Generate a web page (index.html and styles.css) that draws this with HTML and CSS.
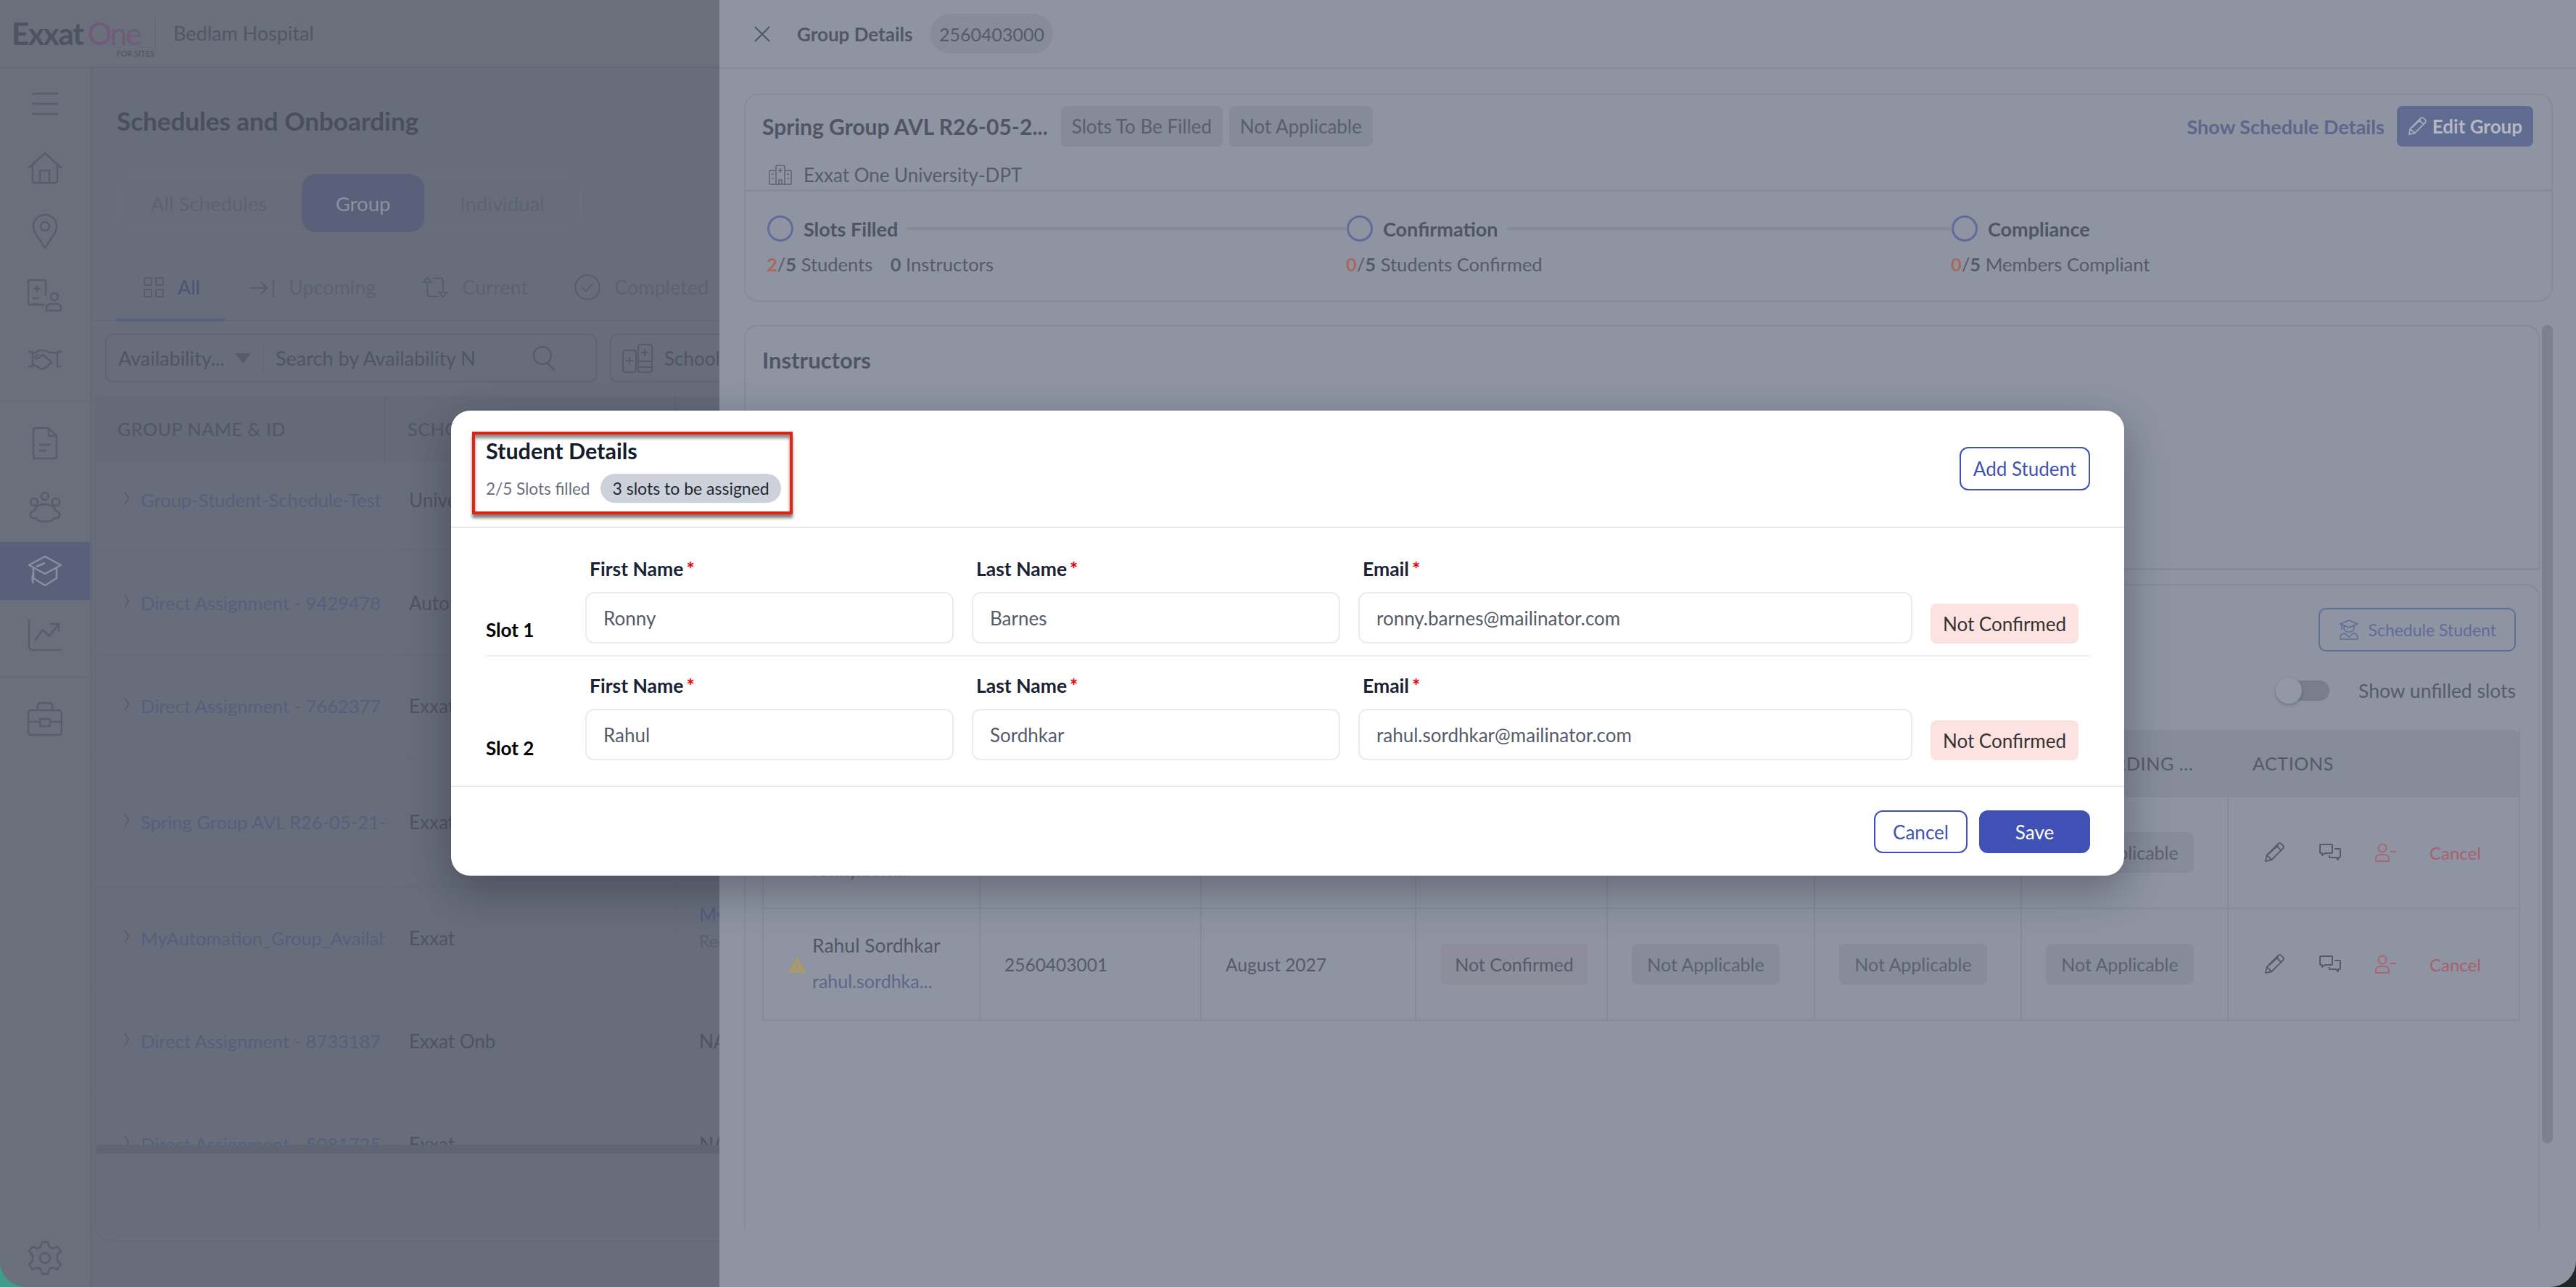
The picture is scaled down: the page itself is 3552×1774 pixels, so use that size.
FILE: index.html
```html
<!DOCTYPE html>
<html lang="en">

<head>
    <meta charset="UTF-8">
    <title>Schedules and Onboarding</title>
    <link rel="stylesheet" href="styles.css">
</head>

<body>
    <svg class="defs" width="0" height="0">
        <symbol id="i-pencil" viewBox="0 0 30 30">
            <path d="M2 28l2-9L21 2c1-1 3-1 4 0l3 3c1 1 1 3 0 4L11 26zM4 19l7 7M18 5l7 7M7 17L21 4" fill="none" stroke="currentColor" stroke-width="2" stroke-linejoin="round" />
        </symbol>
        <symbol id="i-chat" viewBox="0 0 30 24">
            <path d="M2 1h15c1 0 1 1 1 1v10c0 1-1 1-1 1H8l-4 3v-3H2c-1 0-1-1-1-1V2s0-1 1-1zM21 7h7c1 0 1 1 1 1v10c0 1-1 1-1 1h-2v3l-3-3h-9v-3" fill="none" stroke="currentColor" stroke-width="2" stroke-linejoin="round" />
        </symbol>
        <symbol id="i-user-minus" viewBox="0 0 30 26">
            <circle cx="10" cy="7" r="5.5" fill="none" stroke="currentColor" stroke-width="2" />
            <path d="M1 25v-4c0-3 3-5 6-5h6c3 0 6 2 6 5v4zM21 12h8" fill="none" stroke="currentColor" stroke-width="2" />
        </symbol>
    </svg>

    <div class="window">
        <div class="app">
            <header class="topbar">
                <div class="logo">
                    <span class="logo-exxat">Exxat</span><span class="logo-one">One</span>
                    <span class="logo-sites">FOR SITES</span>
                </div>
                <span class="hospital">Bedlam Hospital</span>
            </header>

            <div class="app-body">
                <nav class="sidebar">
                    <div class="side-group">
                        <div class="side-item">
                            <svg class="side-ic" viewBox="0 0 48 48"><path d="M6 10h36M6 24h36M6 38h36" /></svg>
                        </div>
                        <div class="side-item">
                            <svg class="side-ic" viewBox="0 0 48 44"><path d="M1 23L24 2l23 21M7 18v22c0 2 1 3 3 3h28c2 0 3-1 3-3V18M17 43V26h13v17" /></svg>
                        </div>
                        <div class="side-item">
                            <svg class="side-ic" viewBox="0 0 48 48"><path d="M24 47C17 34 8 27 8 17a16 16 0 0 1 32 0c0 10-9 17-16 30z" /><circle cx="24" cy="17" r="6" /></svg>
                        </div>
                        <div class="side-item">
                            <svg class="side-ic" viewBox="0 0 48 44"><path d="M24 35H3c-1 0-2-1-2-2V3c0-1 1-2 2-2h20c1 0 2 1 2 2v20M7 26h8M7 34h8M13 8v10M8 13h10" /><circle cx="37" cy="24" r="5" /><path d="M26 43v-4c0-3 3-5 5-5h10c3 0 5 2 5 5v4z" /></svg>
                        </div>
                        <div class="side-item">
                            <svg class="side-ic" viewBox="0 0 48 30"><path d="M1 5h6v20H1M47 5h-6v20h6M7 8l9-5h8l6 3 7 0 4 2M7 22l4 2 8 5c2 0 3-1 3-2 2 1 4 0 4-2 2 0 4-1 3-3 3 0 5-2 3-4l-11-9-7 5c-2 1-4 0-4-2l5-4" /></svg>
                        </div>
                    </div>
                    <div class="side-group">
                        <div class="side-item">
                            <svg class="side-ic" viewBox="0 0 48 44"><path d="M8 40V4c0-2 1-3 3-3h18l11 11v28c0 2-1 3-3 3H11c-2 0-3-1-3-3zM29 1v11h11M16 24h16M16 32h10" /></svg>
                        </div>
                        <div class="side-item">
                            <svg class="side-ic" viewBox="0 0 48 42"><circle cx="24" cy="6" r="5" /><circle cx="9" cy="14" r="5" /><circle cx="39" cy="14" r="5" /><path d="M24 17c8 0 13 4 15 9 4 1 6 4 5 7s-4 4-7 3c-3 4-8 5-13 5s-10-1-13-5c-3 1-6 0-7-3s1-6 5-7c2-5 7-9 15-9z" /></svg>
                        </div>
                        <div class="side-item side-item-active">
                            <svg class="side-ic" viewBox="0 0 48 42"><path d="M24 1L2 13l22 12 22-12zM8 17v14l16 10 16-10V17M12 15l12-5M8 24c-2 6-2 10 0 14" /></svg>
                        </div>
                        <div class="side-item">
                            <svg class="side-ic" viewBox="0 0 48 44"><path d="M2 1v37c0 3 2 5 5 5h40M10 30l11-15 9 9 13-17M31 7h12v11" /></svg>
                        </div>
                    </div>
                    <div class="side-group side-group-last">
                        <div class="side-item">
                            <svg class="side-ic" viewBox="0 0 48 46"><rect x="1" y="11" width="46" height="34" rx="4" /><path d="M14 11V5c0-2 1-4 4-4h12c3 0 4 2 4 4v6M1 27h16M31 27h16M17 23h14v7c0 2-1 3-3 3h-8c-2 0-3-1-3-3z" /></svg>
                        </div>
                    </div>
                    <div class="side-foot">
                        <svg class="side-ic" viewBox="0 0 48 48"><circle cx="24" cy="24" r="7" /><path d="M20 2h8l2 7 5 2 6-3 5 7-5 5v8l5 5-5 7-6-3-5 2-2 7h-8l-2-7-5-2-6 3-5-7 5-5v-8l-5-5 5-7 6 3 5-2z" /></svg>
                    </div>
                </nav>

                <main class="main">
                    <h1 class="page-title">Schedules and Onboarding</h1>

                    <div class="segment">
                        <span class="seg-item seg-first">All Schedules</span>
                        <span class="seg-item seg-active">Group</span>
                        <span class="seg-item seg-last">Individual</span>
                    </div>

                    <div class="tabs">
                        <div class="tab tab-active">
                            <svg class="tab-ic" viewBox="0 0 28 28"><rect x="1" y="1" width="10" height="10" rx="2" /><rect x="17" y="1" width="10" height="10" rx="2" /><rect x="1" y="17" width="10" height="10" rx="2" /><rect x="17" y="17" width="10" height="10" rx="2" /></svg>
                            All
                        </div>
                        <div class="tab">
                            <svg class="tab-ic tab-ic-wide" viewBox="0 0 36 28"><path d="M1 15h24M17 7l8 8-8 8M34 3v24" /></svg>
                            Upcoming
                        </div>
                        <div class="tab">
                            <svg class="tab-ic tab-ic-wide" viewBox="0 0 40 36"><path d="M8 12v16c0 3 2 4 4 4h12M2 10l6-7 6 7zM32 24V8c0-3-2-4-4-4H16M26 26l6 7 6-7z" /></svg>
                            Current
                        </div>
                        <div class="tab">
                            <svg class="tab-ic tab-ic-wide" viewBox="0 0 40 40"><circle cx="20" cy="20" r="18.5" /><path d="M12 20l6 6 10-12" /></svg>
                            Completed
                        </div>
                    </div>

                    <div class="filters">
                        <div class="search-box">
                            <span class="search-type">Availability...</span>
                            <span class="search-caret"></span>
                            <span class="search-text">Search by Availability Name</span>
                            <svg class="search-ic" viewBox="0 0 32 34"><circle cx="13" cy="13" r="12" /><path d="M20 23l10 11" /></svg>
                        </div>
                        <div class="filter-btn">
                            <svg class="filter-ic" viewBox="0 0 42 40"><rect x="1" y="9" width="18" height="30" rx="3" /><rect x="22" y="1" width="19" height="38" rx="3" /><path d="M10 18v10M5 23h10M31 7v10M26 12h10M22 24h19M22 32h19" /></svg>
                            School
                        </div>
                    </div>

                    <section class="sched">
                        <div class="sched-head">
                            <span class="sched-th sched-th-first">GROUP NAME &amp; ID</span>
                            <span class="sched-th">SCHOOL</span>
                            <span class="sched-th"></span>
                        </div>
                        <div class="sched-body">
                            <div class="sched-cell sched-name sched-top"><span class="chev"></span>Group-Student-Schedule-Test</div>
                            <div class="sched-cell sched-top">University</div>
                            <div class="sched-cell"></div>

                            <div class="sched-cell sched-name"><span class="chev"></span>Direct Assignment - 9429478</div>
                            <div class="sched-cell">Automation</div>
                            <div class="sched-cell"></div>

                            <div class="sched-cell sched-name"><span class="chev"></span>Direct Assignment - 7662377</div>
                            <div class="sched-cell">Exxat</div>
                            <div class="sched-cell"></div>

                            <div class="sched-cell sched-name"><span class="chev"></span>Spring Group AVL R26-05-21-</div>
                            <div class="sched-cell">Exxat</div>
                            <div class="sched-cell"></div>

                            <div class="sched-cell sched-name"><span class="chev"></span>MyAutomation_Group_Availability</div>
                            <div class="sched-cell">Exxat</div>
                            <div class="sched-cell sched-two"><span class="sched-my">My</span><span class="sched-rec">Rec</span></div>

                            <div class="sched-cell sched-name"><span class="chev"></span>Direct Assignment - 8733187</div>
                            <div class="sched-cell">Exxat Onb</div>
                            <div class="sched-cell">NA</div>

                            <div class="sched-cell sched-name"><span class="chev"></span>Direct Assignment - 5081725</div>
                            <div class="sched-cell">Exxat</div>
                            <div class="sched-cell">NA</div>
                        </div>
                        <div class="sched-scroll"></div>
                    </section>
                </main>
            </div>
        </div>

        <aside class="drawer">
            <div class="drawer-head">
                <svg class="close-ic" viewBox="0 0 22 22"><path d="M1 1l20 20M21 1L1 21" /></svg>
                <span class="drawer-title">Group Details</span>
                <span class="id-pill">2560403000</span>
            </div>

            <div class="summary">
                <div class="summary-top">
                    <div class="summary-row">
                        <h2 class="group-name">Spring Group AVL R26-05-2...</h2>
                        <span class="tag">Slots To Be Filled</span>
                        <span class="tag">Not Applicable</span>
                        <a class="show-link">Show Schedule Details</a>
                        <span class="edit-btn">
                            <svg class="edit-ic"><use href="#i-pencil" /></svg>
                            Edit Group
                        </span>
                    </div>
                    <div class="uni-row">
                        <svg class="uni-ic" viewBox="0 0 32 28"><path d="M10 27V3c0-1 1-2 2-2h8c1 0 2 1 2 2v24zM10 8H2c-1 0-1 1-1 1v17c0 1 1 1 1 1h8M22 8h8c1 0 1 1 1 1v17c0 1-1 1-1 1h-8M14 27v-6h4v6M16 5v6M13 8h6M4 13h3M4 19h3M25 13h3M25 19h3" /></svg>
                        Exxat One University-DPT
                    </div>
                </div>
                <div class="steps">
                    <div class="step">
                        <div class="step-head"><span class="step-dot"></span><span class="step-name">Slots Filled</span><span class="step-line"></span></div>
                        <div class="step-sub"><b class="hot">2</b>/<b>5</b> Students <span class="step-gap"><b>0</b> Instructors</span></div>
                    </div>
                    <div class="step">
                        <div class="step-head"><span class="step-dot"></span><span class="step-name">Confirmation</span><span class="step-line"></span></div>
                        <div class="step-sub"><b class="hot">0</b>/<b>5</b> Students Confirmed</div>
                    </div>
                    <div class="step">
                        <div class="step-head"><span class="step-dot"></span><span class="step-name">Compliance</span></div>
                        <div class="step-sub"><b class="hot">0</b>/<b>5</b> Members Compliant</div>
                    </div>
                </div>
            </div>

            <div class="drawer-scroll">
                <div class="drawer-col">
                    <section class="instructors">
                        <h2 class="section-title">Instructors</h2>
                    </section>
                    <section class="students">
                        <div class="students-tools">
                            <span class="schedule-btn">
                                <svg class="schedule-ic" viewBox="0 0 26 28"><path d="M13 1L1 6l12 5 12-5zM6 8v4c0 3 3 5 7 5s7-2 7-5V8M3 7v7M1 27v-3c0-3 3-5 6-5l6 5 6-5c3 0 6 2 6 5v3z" /></svg>
                                Schedule Student
                            </span>
                            <div class="toggle-row">
                                <span class="toggle"><span class="toggle-knob"></span></span>
                                <span class="toggle-label">Show unfilled slots</span>
                            </div>
                        </div>

                        <div class="stu-table">
                            <div class="stu-row stu-head">
                                <span class="stu-cell"></span>
                                <span class="stu-cell"></span>
                                <span class="stu-cell"></span>
                                <span class="stu-cell"></span>
                                <span class="stu-cell"></span>
                                <span class="stu-cell"></span>
                                <span class="stu-cell stu-th">ONBOARDING ...</span>
                                <span class="stu-cell stu-th stu-actions-th">ACTIONS</span>
                            </div>
                            <div class="stu-row">
                                <div class="stu-cell stu-person">
                                    <svg class="warn-ic" viewBox="0 0 26 24"><path d="M13 0l13 24H0z" /><path class="warn-mark" d="M12 8h2v9h-2zM12 19h2v2h-2z" /></svg>
                                    <div class="stu-names"><span>Ronny Barnes</span><span class="stu-mail">ronny.barn...</span></div>
                                </div>
                                <div class="stu-cell stu-text">2560403000</div>
                                <div class="stu-cell stu-text">August 2027</div>
                                <div class="stu-cell"><span class="stu-pill stu-pill-red">Not Confirmed</span></div>
                                <div class="stu-cell"><span class="stu-pill">Not Applicable</span></div>
                                <div class="stu-cell"><span class="stu-pill">Not Applicable</span></div>
                                <div class="stu-cell"><span class="stu-pill">Not Applicable</span></div>
                                <div class="stu-cell stu-actions">
                                    <svg class="act-ic"><use href="#i-pencil" /></svg>
                                    <svg class="act-ic"><use href="#i-chat" /></svg>
                                    <svg class="act-ic act-red"><use href="#i-user-minus" /></svg>
                                    <span class="act-cancel">Cancel</span>
                                </div>
                            </div>
                            <div class="stu-row">
                                <div class="stu-cell stu-person">
                                    <svg class="warn-ic" viewBox="0 0 26 24"><path d="M13 0l13 24H0z" /><path class="warn-mark" d="M12 8h2v9h-2zM12 19h2v2h-2z" /></svg>
                                    <div class="stu-names"><span>Rahul Sordhkar</span><span class="stu-mail">rahul.sordhka...</span></div>
                                </div>
                                <div class="stu-cell stu-text">2560403001</div>
                                <div class="stu-cell stu-text">August 2027</div>
                                <div class="stu-cell"><span class="stu-pill stu-pill-red">Not Confirmed</span></div>
                                <div class="stu-cell"><span class="stu-pill">Not Applicable</span></div>
                                <div class="stu-cell"><span class="stu-pill">Not Applicable</span></div>
                                <div class="stu-cell"><span class="stu-pill">Not Applicable</span></div>
                                <div class="stu-cell stu-actions">
                                    <svg class="act-ic"><use href="#i-pencil" /></svg>
                                    <svg class="act-ic"><use href="#i-chat" /></svg>
                                    <svg class="act-ic act-red"><use href="#i-user-minus" /></svg>
                                    <span class="act-cancel">Cancel</span>
                                </div>
                            </div>
                        </div>
                    </section>
                </div>
                <div class="drawer-bar"></div>
            </div>
        </aside>

        <div class="modal">
            <div class="modal-head">
                <div>
                    <h3 class="modal-title">Student Details</h3>
                    <div class="modal-sub">
                        <span class="slots-filled">2/5 Slots filled</span>
                        <span class="slots-pill">3 slots to be assigned</span>
                    </div>
                </div>
                <button class="btn btn-line btn-add">Add Student</button>
            </div>
            <div class="highlight"></div>

            <div class="modal-body">
                <div class="slot">
                    <span class="slot-name">Slot 1</span>
                    <label class="field"><span class="field-label">First Name<i class="req">*</i></span><input class="field-input" value="Ronny"></label>
                    <label class="field"><span class="field-label">Last Name<i class="req">*</i></span><input class="field-input" value="Barnes"></label>
                    <label class="field"><span class="field-label">Email<i class="req">*</i></span><input class="field-input" value="ronny.barnes@mailinator.com"></label>
                    <span class="state">Not Confirmed</span>
                </div>
                <div class="slot">
                    <span class="slot-name">Slot 2</span>
                    <label class="field"><span class="field-label">First Name<i class="req">*</i></span><input class="field-input" value="Rahul"></label>
                    <label class="field"><span class="field-label">Last Name<i class="req">*</i></span><input class="field-input" value="Sordhkar"></label>
                    <label class="field"><span class="field-label">Email<i class="req">*</i></span><input class="field-input" value="rahul.sordhkar@mailinator.com"></label>
                    <span class="state">Not Confirmed</span>
                </div>
            </div>

            <div class="modal-foot">
                <button class="btn btn-line btn-cancel">Cancel</button>
                <button class="btn btn-save">Save</button>
            </div>
        </div>
    </div>
</body>

</html>
```

FILE: styles.css
```css
* {
    box-sizing: border-box;
}

html,
body {
    margin: 0;
    height: 100%;
}

body {
    font-family: Lato, "Noto Sans", Arial, sans-serif;
    font-size: 26px;
    color: #525767;
    background: linear-gradient(90deg, #3f9c8a 50%, #22262b 50%);
    overflow: hidden;
}

.defs {
    position: absolute;
}

.window {
    position: relative;
    height: 100vh;
    overflow: hidden;
    border-radius: 0 0 36px 36px;
}

/* left page, dimmed */

.app {
    display: flex;
    flex-direction: column;
    height: 100%;
    background: #676d7a;
}

.topbar {
    display: flex;
    align-items: center;
    height: 94px;
    flex: none;
    padding-left: 16px;
    border-bottom: 2px solid #636976;
    background: #6a6f7c;
}

.logo {
    position: relative;
    width: 197px;
    padding-right: 16px;
    font-size: 42px;
    letter-spacing: -2px;
    line-height: 50px;
    white-space: nowrap;
}

.logo-exxat {
    font-weight: 700;
    letter-spacing: -1.2px;
    color: #4e5362;
}

.logo-one {
    margin-left: 6px;
    color: #715a7a;
}

.logo-sites {
    position: absolute;
    top: 46px;
    right: 0;
    font-size: 11px;
    letter-spacing: 0;
    line-height: 14px;
    color: #4e5362;
}

.hospital {
    padding-left: 24px;
    border-left: 2px solid #636976;
    line-height: 40px;
    color: #525766;
    font-size: 27px;
}

.app-body {
    display: flex;
    flex: 1;
    min-height: 0;
}

.sidebar {
    display: flex;
    flex-direction: column;
    width: 124px;
    flex: none;
    padding-top: 5px;
    background: #6a6f7c;
}

.side-group {
    padding-bottom: 13px;
    margin-bottom: 13px;
    border-bottom: 2px solid #656a77;
}

.side-group-last {
    border-bottom: none;
}

.side-item {
    display: flex;
    align-items: center;
    justify-content: center;
    height: 88px;
}

.side-item-active {
    background: #5a607a;
    background-clip: content-box;
    padding: 4px 0;
}

.side-ic {
    width: 48px;
    height: 48px;
    fill: none;
    stroke: #575d6c;
    stroke-width: 2.5;
    stroke-linejoin: round;
}

.side-item-active .side-ic {
    stroke: #8b90a0;
}

.side-foot {
    display: flex;
    align-items: center;
    justify-content: center;
    height: 80px;
    margin-top: auto;
}

.main {
    flex: 1;
    min-width: 0;
    overflow: hidden;
    border-left: 4px solid #656a77;
}

.page-title {
    margin: 50px 0 0 33px;
    font-size: 35px;
    font-weight: 700;
    line-height: 44px;
    color: #4a4f5e;
}

.segment {
    display: flex;
    width: 640px;
    height: 80px;
    margin: 52px 0 0 33px;
    border: 1px solid #6a707d;
    border-radius: 18px;
    align-items: center;
}

.seg-item {
    font-size: 27.5px;
    color: #5e6370;
}

.seg-first {
    padding: 0 46px;
}

.seg-active {
    display: flex;
    align-items: center;
    justify-content: center;
    width: 169px;
    height: 80px;
    margin-left: 2px;
    border-radius: 20px;
    background: #5a607a;
    color: #8d909e;
}

.seg-last {
    padding-left: 49px;
}

.tabs {
    display: flex;
    height: 73px;
    margin: 50px 0 0 0;
    padding-left: 32px;
    border-bottom: 2px solid #636875;
}

.tab {
    display: flex;
    align-items: center;
    gap: 19px;
    height: 73px;
    padding: 0 32px 22px;
    font-size: 27px;
    color: #5d6270;
}

.tab-active {
    width: 151px;
    padding-left: 38px;
    padding-bottom: 18px;
    color: #4e5378;
    border-bottom: 4px solid #5a607a;
}

.tab-ic {
    width: 28px;
    height: 28px;
    fill: none;
    stroke: #565c6b;
    stroke-width: 2;
}

.tab-ic-wide {
    width: 36px;
    height: 40px;
}

.filters {
    display: flex;
    gap: 18px;
    height: 67px;
    margin: 17px 0 0 17px;
}

.search-box {
    display: flex;
    align-items: center;
    width: 678px;
    padding-left: 16px;
    border: 2px solid #5f6471;
    border-radius: 10px;
    color: #505564;
    font-size: 27px;
}

.search-type {
    width: 161px;
    white-space: nowrap;
}

.search-caret {
    width: 0;
    height: 0;
    margin-left: 0;
    border-left: 11px solid transparent;
    border-right: 11px solid transparent;
    border-top: 14px solid #575c6b;
}

.search-text {
    width: 293px;
    height: 40px;
    margin-left: 16px;
    padding-left: 16px;
    overflow: hidden;
    white-space: nowrap;
    border-left: 2px solid #636875;
    line-height: 40px;
}

.search-ic {
    width: 32px;
    height: 34px;
    margin-left: 80px;
    fill: none;
    stroke: #545a69;
    stroke-width: 2;
}

.filter-btn {
    display: flex;
    align-items: center;
    gap: 16px;
    width: 300px;
    padding-left: 15px;
    border: 2px solid #5f6471;
    border-radius: 10px;
    color: #505564;
}

.filter-ic {
    width: 42px;
    height: 40px;
    fill: none;
    stroke: #555b6a;
    stroke-width: 2;
}

.sched {
    height: 1166px;
    margin: 19px 0 0 2px;
    border: 2px solid #646a77;
    border-top: none;
    border-right: none;
    border-radius: 0 0 0 24px;
}

.sched-head {
    display: grid;
    grid-template-columns: 400px 400px 1fr;
    height: 90px;
    background: #646a77;
}

.sched-th {
    display: flex;
    align-items: center;
    padding-left: 30px;
    font-size: 25px;
    letter-spacing: 0.6px;
    color: #515766;
    border-right: 2px solid #61676f;
}

.sched-body {
    display: grid;
    grid-template-columns: 400px 400px 1fr;
    grid-template-rows: 124px 144px 140px 180px 140px 144px 140px;
    height: 942px;
    overflow: hidden;
}

.sched-cell {
    display: flex;
    align-items: center;
    min-width: 0;
    padding-left: 32px;
    white-space: nowrap;
    overflow: hidden;
    color: #4f5463;
    border-bottom: 2px solid #656b78;
    border-right: 2px solid #656b78;
}

.sched-top {
    padding-bottom: 16px;
}

.sched-name {
    padding-left: 36px;
    font-size: 25.5px;
    color: #595e7c;
}

.chev {
    flex: none;
    width: 13px;
    height: 13px;
    margin: -6px 15px 0 -2px;
    border-top: 2px solid #565c6b;
    border-right: 2px solid #565c6b;
    transform: scaleX(0.6) rotate(45deg);
}

.sched-two {
    flex-direction: column;
    align-items: flex-start;
    justify-content: center;
}

.sched-my {
    color: #565c7e;
    margin-bottom: 6px;
    margin-top: -30px;
}

.sched-rec {
    font-size: 23px;
    color: #5a6070;
}

.sched-scroll {
    height: 12px;
    background: #5f6573;
    border-radius: 6px 0 0 6px;
}

/* right drawer */

.drawer {
    position: absolute;
    top: 0;
    left: 992px;
    right: 0;
    bottom: 0;
    background: #8e94a2;
    padding-bottom: 20px;
}

.drawer-head {
    display: flex;
    align-items: center;
    height: 95px;
    padding-left: 48px;
    border-bottom: 2px solid #868c9a;
}

.close-ic {
    width: 22px;
    height: 22px;
    fill: none;
    stroke: #505565;
    stroke-width: 2;
}

.drawer-title {
    width: 161px;
    margin-left: 37px;
    font-weight: 700;
    font-size: 26px;
    white-space: nowrap;
    color: #525767;
}

.id-pill {
    display: flex;
    align-items: center;
    justify-content: center;
    width: 169px;
    height: 55px;
    margin-left: 23px;
    border-radius: 28px;
    background: #868c9a;
    font-size: 25px;
    color: #565b6a;
}

.summary {
    margin: 34px 32px 0 34px;
    height: 287px;
    border: 2px solid #858b99;
    border-radius: 20px;
}

.summary-top {
    height: 133px;
    padding: 15px 25px 0 23px;
    border-bottom: 3px solid #858b99;
}

.summary-row {
    display: flex;
    align-items: center;
    height: 56px;
}

.group-name {
    margin: 0 18px 0 0;
    font-size: 30px;
    font-weight: 700;
    color: #505565;
    white-space: nowrap;
}

.tag {
    display: flex;
    align-items: center;
    height: 56px;
    margin-right: 9px;
    padding: 0 15px;
    border-radius: 8px;
    background: #858b99;
    color: #595e6d;
}

.show-link {
    margin-left: auto;
    margin-right: 17px;
    font-weight: 700;
    color: #5d6689;
    font-size: 27px;
}

.edit-btn {
    display: flex;
    align-items: center;
    gap: 8px;
    height: 56px;
    padding: 0 15px;
    border-radius: 8px;
    background: #5f6b90;
    color: #b4b8c4;
    font-weight: 700;
    font-size: 26px;
}

.edit-ic {
    width: 26px;
    height: 32px;
    color: #a8adbb;
}

.uni-row {
    display: flex;
    align-items: center;
    gap: 16px;
    margin-top: 23px;
    padding-left: 9px;
    color: #565b6a;
}

.uni-ic {
    width: 32px;
    height: 28px;
    fill: none;
    stroke: #5e6372;
    stroke-width: 1.5;
}

.steps {
    display: grid;
    grid-template-columns: 799px 834px 1fr;
    padding: 33px 0 0 29px;
}

.step-head {
    display: flex;
    align-items: center;
    height: 36px;
}

.step-dot {
    flex: none;
    width: 36px;
    height: 36px;
    border: 3px solid #5f6d9a;
    border-radius: 50%;
    margin-left: 1px;
}

.step-name {
    margin: 0 12px 0 14px;
    font-size: 27px;
    font-weight: 700;
    color: #505565;
}

.step-line {
    flex: 1;
    height: 4px;
    background: #858b99;
}

.step-sub {
    margin-top: 16px;
    font-size: 25.5px;
    color: #555a69;
}

.hot {
    color: #a86a5c;
}

.step-gap {
    margin-left: 18px;
}

.drawer-scroll {
    display: flex;
    gap: 3px;
    margin: 32px 32px 0 34px;
}

.drawer-col {
    flex: 1;
    min-width: 0;
}

.drawer-bar {
    flex: none;
    width: 15px;
    height: 1128px;
    border-radius: 8px;
    background: #7b818f;
}

.instructors {
    height: 338px;
    padding: 27px 23px 0;
    border: 2px solid #858b99;
    border-bottom-width: 3px;
    border-radius: 18px 18px 0 0;
}

.section-title {
    margin: 0;
    font-size: 31px;
    font-weight: 700;
    color: #505565;
}

.students {
    height: 892px;
    margin-top: 19px;
    padding: 31px 23px 0;
    border-left: 2px solid #868c9a;
    border-right: 2px solid #868c9a;
    border-top: 2px solid #858b99;
    border-radius: 18px 18px 0 0;
}

.students-tools {
    display: flex;
    flex-direction: column;
    align-items: flex-end;
    padding-right: 8px;
}

.schedule-btn {
    display: flex;
    align-items: center;
    gap: 13px;
    height: 60px;
    padding: 0 25px 0 27px;
    border: 2px solid #5f6d9a;
    border-radius: 10px;
    font-size: 23px;
    color: #5f6d9a;
}

.schedule-ic {
    width: 26px;
    height: 30px;
    fill: none;
    stroke: #5f6d9a;
    stroke-width: 1.5;
}

.toggle-row {
    display: flex;
    align-items: center;
    gap: 40px;
    height: 30px;
    margin-top: 39px;
}

.toggle {
    display: flex;
    align-items: center;
    width: 60px;
    height: 28px;
    margin-left: 14px;
    border-radius: 14px;
    background: #787e8c;
}

.toggle-knob {
    width: 36px;
    height: 36px;
    margin-left: -14px;
    border-radius: 50%;
    background: #9298a6;
    box-shadow: 0 2px 4px rgba(40, 46, 60, 0.3);
}

.toggle-label {
    font-size: 26.5px;
    color: #565b6a;
}

.stu-table {
    margin-top: 39px;
    width: 2424px;
}

.stu-row {
    display: grid;
    grid-template-columns: 299px 305px 296px 264px 286px 285px 285px 404px;
    height: 154px;
    border-bottom: 2px solid #858b99;
}

.stu-head {
    height: 93px;
    background: #868c9a;
    border-radius: 12px 12px 0 0;
}

.stu-cell {
    display: flex;
    align-items: center;
    min-width: 0;
    padding-left: 33px;
    border-left: 2px solid #858b99;
}

.stu-cell:last-child {
    border-right: 2px solid #858b99;
}

.stu-th {
    font-size: 25px;
    letter-spacing: 0.6px;
    color: #555a69;
    white-space: nowrap;
}

.stu-person {
    gap: 8px;
    padding-left: 33px;
}

.warn-ic {
    flex: none;
    width: 26px;
    height: 23px;
    fill: #a89a6a;
}

.warn-mark {
    fill: #8e94a2;
}

.stu-names {
    display: flex;
    flex-direction: column;
    gap: 18px;
    white-space: nowrap;
    line-height: 31px;
    margin-top: -2px;
    font-size: 26.5px;
}

.stu-mail {
    font-size: 25px;
    color: #5d6689;
}

.stu-text {
    color: #565b6a;
    font-size: 24.5px;
}

.stu-pill {
    display: flex;
    align-items: center;
    justify-content: center;
    width: 204px;
    height: 56px;
    border-radius: 8px;
    background: #868c9a;
    color: #5c6170;
    font-size: 25px;
    white-space: nowrap;
}

.stu-pill-red {
    background: #8d8d9c;
    color: #55596a;
}

.stu-actions {
    gap: 47px;
    padding-left: 48px;
}

.act-ic {
    width: 30px;
    height: 28px;
    color: #565b6a;
}

.act-red {
    color: #ab6676;
}

.act-cancel {
    margin-left: -2px;
    font-size: 24px;
    color: #a8606e;
}

/* student details modal */

.modal {
    position: absolute;
    top: 566px;
    left: 622px;
    width: 2307px;
    height: 641px;
    border-radius: 26px;
    background: #fff;
    box-shadow: 0 20px 60px rgba(20, 24, 36, 0.35);
    color: #1a2233;
}

.modal-head {
    display: flex;
    align-items: center;
    justify-content: space-between;
    height: 162px;
    padding: 0 47px 0 48px;
    border-bottom: 2px solid #e6e6ee;
}

.modal-title {
    margin: 0;
    padding-top: 4px;
    font-size: 30.5px;
    font-weight: 700;
    line-height: 36px;
    color: #151c2b;
}

.modal-sub {
    display: flex;
    align-items: center;
    gap: 15px;
    margin-top: 14px;
}

.slots-filled {
    font-size: 22.5px;
    color: #6a7080;
}

.slots-pill {
    display: flex;
    align-items: center;
    height: 40px;
    padding: 0 16px;
    border-radius: 20px;
    background: #cdd2da;
    font-size: 23px;
    color: #1f2635;
}

.highlight {
    position: absolute;
    top: 29px;
    left: 29px;
    width: 442px;
    height: 114px;
    border: 4px solid #e8210f;
    box-shadow: 0 5px 4px rgba(0, 0, 0, 0.5), inset 0 5px 4px rgba(0, 0, 0, 0.45);
}

.modal-body {
    height: 355px;
    padding: 16px 47px 0 48px;
}

.slot {
    display: grid;
    grid-template-columns: 112px 508px 508px 764px 204px;
    column-gap: 25px;
    height: 161px;
    padding-top: 25px;
    border-bottom: 2px solid #f0f0f5;
}

.slot:last-child {
    border-bottom: none;
}

.slot-name {
    align-self: end;
    padding-bottom: 20px;
    font-size: 26px;
    font-weight: 700;
    line-height: 30px;
    color: #000;
}

.field {
    display: flex;
    flex-direction: column;
    gap: 17px;
}

.field-label {
    padding-left: 6px;
    font-size: 26.5px;
    font-weight: 700;
    line-height: 30px;
    color: #1a2233;
}

.req {
    margin-left: 4px;
    font-style: normal;
    color: #e8000d;
}

.field-input {
    width: 100%;
    height: 71px;
    padding: 0 23px;
    border: 2px solid #ebebf1;
    border-radius: 12px;
    outline: none;
    font-family: inherit;
    font-size: 26px;
    color: #555b69;
    background: #fff;
}

.state {
    display: flex;
    align-items: center;
    justify-content: center;
    align-self: start;
    height: 55px;
    margin-top: 63px;
    border-radius: 8px;
    background: #fde2e2;
    color: #333;
    white-space: nowrap;
}

.modal-foot {
    display: flex;
    justify-content: flex-end;
    gap: 16px;
    padding: 32px 47px 0 0;
    border-top: 2px solid #e6e6ee;
}

.btn {
    height: 59px;
    border-radius: 12px;
    border: 2px solid #3f51b5;
    font-family: inherit;
    font-size: 26px;
    cursor: pointer;
}

.btn-line {
    background: #fff;
    color: #3f51b5;
}

.btn-add {
    width: 180px;
    height: 60px;
    padding: 0;
}

.btn-cancel {
    width: 129px;
}

.btn-save {
    width: 153px;
    background: #3f51b5;
    color: #fff;
}
```
